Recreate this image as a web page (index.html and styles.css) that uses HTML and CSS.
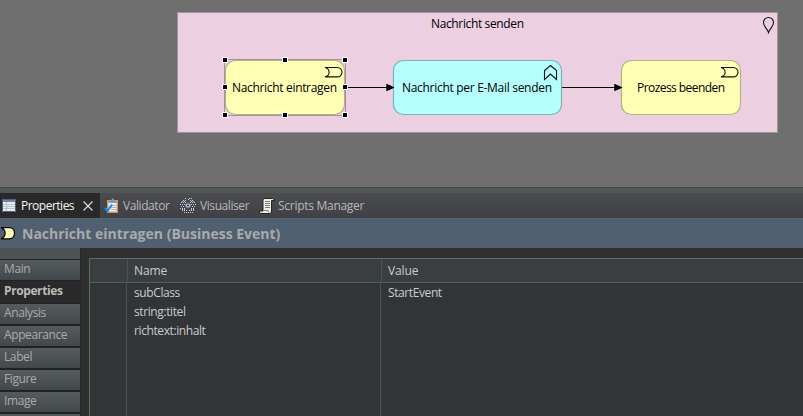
FILE: index.html
```html
<!DOCTYPE html>
<html lang="de">
<head>
<meta charset="utf-8">
<title>Nachricht senden</title>
<link rel="stylesheet" href="styles.css">
</head>
<body>
<main class="app">
  <svg class="canvas" width="803" height="187" viewBox="0 0 803 187">
    <defs>
      <path id="event" d="M0 .5H12.300a4.600 4.600 0 0 1 0 9.400H0C5.500 8.500 5.500 2 0 .5Z"/>
      <path id="arrow" d="M0 0L-8-3.5V3.5Z"/>
    </defs>
    <rect class="group" x="177.5" y="12.5" width="600" height="120"/>
    <text class="label" x="431" y="28" textLength="93">Nachricht senden</text>
    <path class="icon" d="M768.5 32.5C767 28 763.5 26.500 763.500 22.500a5 5 0 0 1 10 0C773.500 26.500 770 28 768.500 32.500Z"/>
    <path class="link" d="M346 87.500H388M561 87.500H616"/>
    <use class="head" href="#arrow" x="394.500" y="87.500"/>
    <use class="head" href="#arrow" x="622.500" y="87.500"/>
    <rect class="node yellow" x="225.500" y="60.500" width="119" height="54" rx="10"/>
    <rect class="node cyan" x="393.500" y="60.500" width="168" height="54" rx="10"/>
    <rect class="node yellow" x="621.500" y="60.500" width="119" height="54" rx="10"/>
    <use class="head" href="#arrow" x="394.500" y="87.500"/>
    <use class="head" href="#arrow" x="622.500" y="87.500"/>
    <use class="icon" href="#event" x="325" y="67"/>
    <use class="icon" href="#event" x="721" y="67"/>
    <path class="icon" d="M544.500 79.500V70.500L550.500 65.500L556.500 70.500V79.500L550.500 74Z"/>
    <text class="label" x="232" y="92" textLength="105">Nachricht eintragen</text>
    <text class="label" x="402" y="92" textLength="150">Nachricht per E-Mail senden</text>
    <text class="label" x="637" y="92" textLength="88">Prozess beenden</text>
    <rect class="selection" x="224.500" y="59.500" width="121" height="56"/>
    <g class="handles">
      <rect x="222.500" y="57.500" width="5" height="5"/><rect x="282.500" y="57.500" width="5" height="5"/><rect x="342.500" y="57.500" width="5" height="5"/>
      <rect x="222.500" y="84.500" width="5" height="5"/><rect x="342.500" y="84.500" width="5" height="5"/>
      <rect x="222.500" y="112.500" width="5" height="5"/><rect x="282.500" y="112.500" width="5" height="5"/><rect x="342.500" y="112.500" width="5" height="5"/>
    </g>
  </svg>
  <div class="sash"></div>
  <nav class="views">
    <div class="view active">
      <svg width="16" height="16" viewBox="0 0 16 16"><path fill="#e9edf2" d="M1 1h14v13H1z"/><path fill="#7584a4" d="M1 1h14v3H1z"/><path stroke="#b9c2d2" d="M1 6.500h14M1 8.500h14M1 10.500h14M5.500 4v10"/><path fill="none" stroke="#56617a" d="M1.500 1.500h13v12h-13z"/></svg>
      <span class="t-properties">Properties</span>
      <svg class="close" width="10" height="10" viewBox="0 0 10 10"><path stroke="#e4e4e4" stroke-width="1.100" d="M.5 .5l9 9M9.500 .5l-9 9"/></svg>
    </div>
    <div class="view validator">
      <svg width="16" height="16" viewBox="0 0 16 16"><path fill="#c99b59" d="M3 2h11v13H3z"/><path fill="#edf2f8" d="M4.500 4h8v9.500h-8z"/><path fill="#8298b4" d="M5 3h2l1-2.500h1.500l1 2.500h2v2H5z"/><path stroke="#a6b5c6" d="M7 7.500h5M7 9.500h5M7 11.500h5"/><path fill="none" stroke="#1e86e8" stroke-width="2" d="M1 10l2.500 3L8 6.500"/></svg>
      <span>Validator</span>
    </div>
    <div class="view visualiser">
      <svg width="16" height="16" viewBox="0 0 16 16"><path stroke="#c5cbd1" fill="none" stroke-dasharray="1 1" d="M5 .5h2M9 .5h3M3 2.500h4M10 2.500h4M1 4.500h5M10 4.500h6M0 6.500h5M11 6.500h5M1 8.500h4M12 8.500h4M0 10.500h5M11 10.500h4M2 12.500h5M9 12.500h5M4 14.500h3M10 14.500h3M2 3.500h3M11 3.500h3M2 11.500h3M11 11.500h4M8 1.500h1M8 14.500h1"/><circle cx="8" cy="7.500" r="2.500" fill="#c9dff4" stroke="#596572"/><circle cx="8" cy="7.500" r="1" fill="#14212d"/></svg>
      <span>Visualiser</span>
    </div>
    <div class="view scripts">
      <svg width="16" height="16" viewBox="0 0 16 16"><path fill="#f1f1eb" stroke="#222" d="M4 11V2.500C4 1 5 .5 6 .5h7.500c1 0 1.500 1 1.500 2h-2.500V13c0 1.500-.8 2.500-2 2.500H2c-1 0-1.500-1-1.500-2.500H4z"/><path fill="none" stroke="#777" d="M6 3.500h5M6 5.500h5M6 7.500h5M6 9.500h5M4 12.500h5l1 2"/></svg>
      <span class="t-scripts">Scripts Manager</span>
    </div>
  </nav>
  <header class="title">
    <svg width="16" height="14" viewBox="0 0 16 14"><path fill="#ffffb5" stroke="#080808" stroke-width="1.300" d="M1 .7h8.500c3 0 5 2.600 5 5.600s-2 5.500-5 5.500H1C6.500 9.500 6.500 3 1 .7Z"/></svg>
    <h1>Nachricht eintragen (Business Event)</h1>
  </header>
  <section class="content">
    <nav class="side">
      <div class="spacer"></div>
      <div class="tab">Main</div>
      <div class="tab current">Properties</div>
      <div class="tab">Analysis</div>
      <div class="tab">Appearance</div>
      <div class="tab">Label</div>
      <div class="tab">Figure</div>
      <div class="tab">Image</div>
      <div class="tab"></div>
    </nav>
    <div class="table">
      <div class="row head-row"><div></div><div>Name</div><div>Value</div></div>
      <div class="body">
        <div class="row"><div></div><div>subClass</div><div>StartEvent</div></div>
        <div class="row"><div></div><div>string:titel</div><div></div></div>
        <div class="row"><div></div><div>richtext:inhalt</div><div></div></div>
        <div class="row fill"><div></div><div></div><div></div></div>
      </div>
    </div>
  </section>
</main>
</body>
</html>
```
FILE: styles.css
```css
* { box-sizing: border-box; }
body { margin: 0; overflow: hidden; background: #2f2f2f; font: 12px/16px "Open Sans", "Noto Sans", sans-serif; color: #ccc; }
.app { width: 803px; height: 416px; display: flex; flex-direction: column; overflow: hidden; }
svg { flex: none; display: block; }
.canvas { background: #6f6f6f; }
.group { fill: #eccfe1; stroke: #a5919e; }
.label { font-size: 12px; fill: #000; }
.icon { fill: none; stroke: #111; stroke-width: 1.1; }
.link { stroke: #000; stroke-width: 1.2; }
.node { stroke-width: 1.2; }
.yellow { fill: #ffffb5; stroke: #b3b37f; }
.cyan { fill: #b5ffff; stroke: #7fb3b3; }
.selection { fill: none; stroke: #a5919e; }
.handles { fill: #000; stroke: #fff; }
.sash { flex: none; height: 6px; background: #515658; border-top: 1px solid #45484a; }
.views { flex: none; height: 25px; display: flex; background: linear-gradient(#4b4c4f, #404144); color: #b8b8b8; white-space: nowrap; letter-spacing: -.42px; }
.view { display: flex; align-items: center; gap: 4px; }
.view.active { width: 100px; padding-left: 1px; background: #292929; color: #f4f4f4; }
.view.active span { width: 53px; }
.t-properties { letter-spacing: -.5px; }
.t-scripts { letter-spacing: -.28px; }
.close { margin-left: 5px; }
.validator { margin-left: 4px; width: 76px; gap: 3px; }
.visualiser { width: 79px; }
.scripts { gap: 3px; }
.title { flex: none; height: 30px; display: flex; align-items: center; gap: 6px; background: #506071; border-top: 1px solid #566575; }
.title h1 { margin: 0; font-size: 14px; line-height: 20px; font-weight: 700; color: #aaa; white-space: nowrap; }
.content { flex: 1; min-height: 0; display: flex; letter-spacing: -.4px; }
.side { width: 81px; border-right: 1px solid #242628; color: #aaa; }
.spacer { height: 11px; background: #4d5355; }
.tab { height: 22px; padding: 1px 0 0 4px; border-top: 1px solid #202325; border-bottom: 1px solid #202325; background: linear-gradient(#555b5d, #43494b); box-shadow: inset 0 -1px #414748; white-space: nowrap; }
.tab.current { background: #292929; border-color: #292929; box-shadow: none; font-weight: 700; color: #bbb; }
.table { flex: 1; margin: 10px 0 0 8px; display: flex; flex-direction: column; border-left: 1px solid #65676a; border-top: 1px solid #65676a; background: #313538; }
.row { display: grid; grid-template-columns: 36px 254px 1fr; height: 19px; line-height: 19px; }
.row > div + div { padding-left: 7px; border-left: 1px solid #4a5259; }
.head-row { height: 24px; line-height: 24px; background: #393f40; border-bottom: 1px solid #565b5e; grid-template-columns: 37px 254px 1fr; letter-spacing: -.1px; }
.row.head-row > div + div { padding-left: 6px; }
.body { flex: 1; display: flex; flex-direction: column; }
.body .row:first-child { line-height: 20px; }
.body .row.fill { flex: 1; }
```
